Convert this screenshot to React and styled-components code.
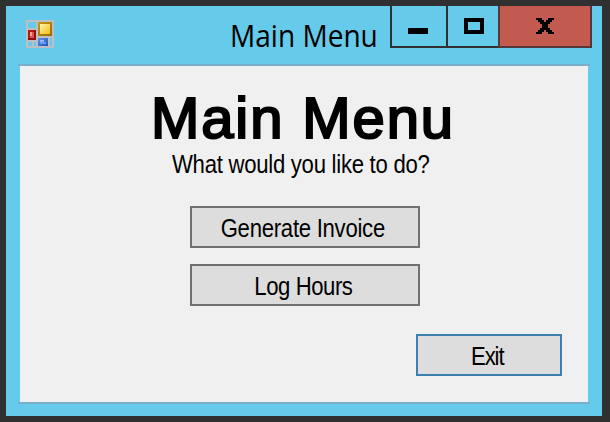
import React from "react";
import styled, { createGlobalStyle } from "styled-components";

const Global = createGlobalStyle`
  * { box-sizing: border-box; }
  body { margin: 0; background: #303030; overflow: hidden; }
`;
const Desktop = styled.div`
  width: 610px; height: 422px; background: #303030; padding: 6px 8px 6px 6px;
  font-family: "Liberation Sans", Arial, sans-serif; color: #000;
`;
const Window = styled.main`
  height: 410px; background: #66caea; display: flex; flex-direction: column;
`;
const TitleBar = styled.header`
  height: 58px; display: flex; align-items: flex-start; padding: 0 10px 0 20px;
`;
const AppIcon = styled.svg`
  width: 28px; height: 28px; margin-top: 14px; flex: none; display: block;
`;
const Title = styled.div`
  margin: 8px 0 0 176px; width: 160px; white-space: nowrap;
  font: 31px/42px "Open Sans", "Noto Sans", sans-serif;
  transform: scaleX(0.905); transform-origin: left;
`;
const Controls = styled.div`
  display: flex; height: 42px; flex: none;
`;
const Control = styled.button`
  width: ${(p) => p.$width}px; height: 42px; border: solid #303030;
  border-width: 0 0 2px 2px; background: transparent; border-radius: 0;
  padding: 12px 0 0 ${(p) => p.$inset}px;
  display: flex; align-items: flex-start;
`;
const CloseControl = styled(Control)`
  background: #c35a50; border-color: #55393a; border-right-width: 2px;
`;
const Glyph = styled.svg`
  width: 20px; height: 16px; display: block; flex: none;
`;
const Client = styled.section`
  margin: 0 12px; height: 340px; padding: 0 2px;
  border: solid #79afc9; border-width: 2px 0;
`;
const Form = styled.div`
  height: 336px; background: #f0f0f0; display: flex; flex-direction: column; align-items: flex-start;
`;
const Heading = styled.h1`
  margin: 20px 0 0 131px; font-size: 58px; line-height: 64px; font-weight: 400; white-space: nowrap;
  letter-spacing: 1.9px; -webkit-text-stroke: 2.2px #000;
`;
const Label = styled.span`
  display: inline-block; white-space: nowrap; font-size: 25px;
  letter-spacing: ${(p) => p.$spacing ?? -0.3}px;
  transform: scaleX(0.885); transform-origin: ${(p) => p.$origin || "center"};
`;
const Prompt = styled.p`
  margin: 1px 0 0 152px; height: 26px; line-height: 26px;
`;
const Button = styled.button`
  width: ${(p) => p.$width || 230}px; height: 42px; flex: none;
  margin: ${(p) => p.$top}px 0 0 ${(p) => p.$left || 170}px;
  border: 2px solid ${(p) => (p.$focused ? "#3c7fb1" : "#707070")};
  background: #ddd; border-radius: 0; color: #000;
  font: 25px/38px "Liberation Sans", Arial, sans-serif;
  display: flex; justify-content: center; align-items: center;
  padding: 1px 4px 0 0;
`;

function FormIcon() {
  return (
    <AppIcon viewBox="0 0 14 14" shapeRendering="crispEdges" aria-hidden="true">
      <defs>
        <linearGradient id="gold" x1="0" y1="0" x2="1" y2="1">
          <stop stopColor="#fff5b0" /><stop offset="1" stopColor="#f8bd13" />
        </linearGradient>
        <linearGradient id="goldEdge" x1="0" y1="0" x2="1" y2="1">
          <stop stopColor="#c29a18" /><stop offset="1" stopColor="#966800" />
        </linearGradient>
        <linearGradient id="blue" x1="0" y1="0" x2="1" y2="1">
          <stop stopColor="#6094ec" /><stop offset="1" stopColor="#2451b4" />
        </linearGradient>
      </defs>
      <path fill="#bcc0c5" d="M0 0h14v14H0z" />
      <path fill="#66caea" d="M1 1h4v3H1zM1 11h2v2H1zM4 11h1v2H4zM12 9h1v4h-1z" />
      <path fill="#b31b12" d="M1 5h4v5H1z" />
      <path fill="#8c110b" d="M4 5h1v5H1V9h3z" />
      <path fill="#df5149" d="M2 6h2v3H2z" />
      <path fill="#f4a09a" d="M2 6h1v2H2z" />
      <path fill="url(#goldEdge)" d="M6 1h7v7H6z" />
      <path fill="url(#gold)" d="M7 2h5v5H7z" />
      <path fill="url(#blue)" d="M6 9h5v4H6z" />
      <path fill="#91b9ff" d="M7 10h2v1H7z" />
      <path fill="#6698f8" d="M7 11h3v1H7z" />
    </AppIcon>
  );
}

export default function App() {
  return (
    <>
      <Global />
      <Desktop>
        <Window>
          <TitleBar>
            <FormIcon />
            <Title>Main Menu</Title>
            <Controls>
              <Control $width={56} $inset={16} aria-label="Minimize">
                <Glyph viewBox="0 0 10 8" shapeRendering="crispEdges"><path d="M0 5h10v3H0z" /></Glyph>
              </Control>
              <Control $width={52} $inset={16} aria-label="Maximize">
                <Glyph viewBox="0 0 10 8" shapeRendering="crispEdges">
                  <path fillRule="evenodd" d="M0 0h10v8H0zM2 2v4h6V2z" />
                </Glyph>
              </Control>
              <CloseControl $width={94} $inset={36} aria-label="Close">
                <Glyph viewBox="0 0 10 8" shapeRendering="crispEdges">
                  <path d="M0 0h3v1H0zM6 0h3v1H6zM1 1h3v1H1zM5 1h3v1H5zM2 2h5v1H2zM3 3h3v2H3zM2 5h5v1H2zM1 6h3v1H1zM5 6h3v1H5zM0 7h3v1H0zM6 7h3v1H6z" />
                </Glyph>
              </CloseControl>
            </Controls>
          </TitleBar>
          <Client>
            <Form>
              <Heading>Main Menu</Heading>
              <Prompt><Label $origin="left">What would you like to do?</Label></Prompt>
              <Button $top={29}><Label>Generate Invoice</Label></Button>
              <Button $top={16}><Label $spacing={-0.5}>Log Hours</Label></Button>
              <Button $top={28} $left={396} $width={146} $focused><Label $spacing={-1.3}>Exit</Label></Button>
            </Form>
          </Client>
        </Window>
      </Desktop>
    </>
  );
}
